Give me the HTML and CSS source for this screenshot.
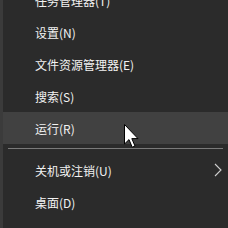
FILE: index.html
```html
<!DOCTYPE html>
<html lang="zh-CN">
<head>
    <meta charset="UTF-8">
    <title>快速链接菜单</title>
    <link rel="stylesheet" href="styles.css">
</head>
<body>
    <div class="menu">
        <div class="item">任务管理器(T)</div>
        <div class="item">设置(N)</div>
        <div class="item">文件资源管理器(E)</div>
        <div class="item">搜索(S)</div>
        <div class="item active">运行(R)</div>
        <div class="separator"></div>
        <div class="item submenu">
            关机或注销(U)
            <svg class="chevron" width="8" height="14" viewBox="0 0 8 14">
                <polyline points="1,1 7,7 1,13" fill="none" stroke="#cfcfcf" stroke-width="1.1"/>
            </svg>
        </div>
        <div class="item">桌面(D)</div>
    </div>

    <svg class="cursor" width="16" height="26" viewBox="0 0 16 26">
        <path d="M0.5 0.5 L0.5 20 L5 15.6 L8.2 23.2 L11 22 L7.8 14.6 L14 14.6 Z" fill="#fff" stroke="#000" stroke-width="1"/>
    </svg>
</body>
</html>
```

FILE: styles.css
```css
body {
    margin: 0;
    height: 228px;
    overflow: hidden;
    background-color: #2b2b2b;
    font-family: "Microsoft YaHei", "Noto Sans CJK SC", sans-serif;
    font-size: 12px;
    color: #f2f2f2;
}

.menu {
    margin-top: -16px;
    border-left: 3px solid #3b3b3b;
    height: 244px;
    overflow: hidden;
}

.item {
    height: 32px;
    display: flex;
    align-items: center;
    padding-left: 32px;
    padding-right: 6px;
}

.item.active {
    background-color: #414141;
}

.item.submenu {
    justify-content: space-between;
}

.separator {
    height: 1px;
    margin: 4px 5px 5px 5px;
    background-color: #7a7a7a;
}

.cursor {
    position: absolute;
    left: 124px;
    top: 124px;
}
```
